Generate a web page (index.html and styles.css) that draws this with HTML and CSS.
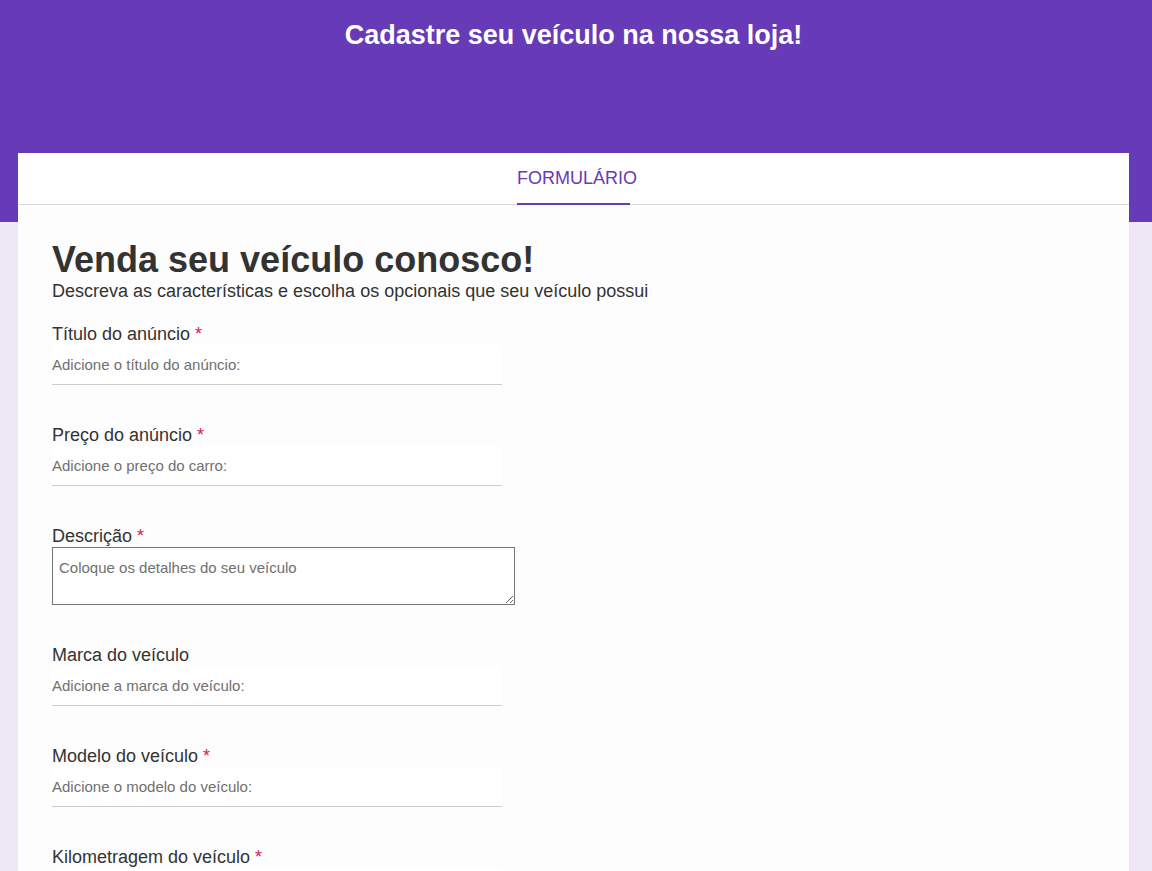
FILE: index.html
```html
<!DOCTYPE html>
<html lang="pt-BR">
<head>
<meta charset="utf-8">
<title>Cadastre seu veículo</title>
<link rel="stylesheet" href="styles.css">
</head>
<body>
<div class="page">
  <header class="top">
    <h1 class="top-title">Cadastre seu veículo na nossa loja!</h1>
  </header>
  <main class="card">
    <nav class="tabs">
      <div class="tab">FORMULÁRIO</div>
    </nav>
    <form class="content">
      <h2 class="heading">Venda seu veículo conosco!</h2>
      <p class="subtitle">Descreva as características e escolha os opcionais que seu veículo possui</p>

      <div class="fields">
        <div class="field">
          <label class="label">Título do anúncio <span class="req">*</span></label>
          <input class="input" type="text" placeholder="Adicione o título do anúncio:">
        </div>

        <div class="field">
          <label class="label">Preço do anúncio <span class="req">*</span></label>
          <input class="input" type="text" placeholder="Adicione o preço do carro:">
        </div>

        <div class="field">
          <label class="label">Descrição <span class="req">*</span></label>
          <textarea class="textarea" placeholder="Coloque os detalhes do seu veículo"></textarea>
        </div>

        <div class="field">
          <label class="label">Marca do veículo</label>
          <input class="input" type="text" placeholder="Adicione a marca do veículo:">
        </div>

        <div class="field">
          <label class="label">Modelo do veículo <span class="req">*</span></label>
          <input class="input" type="text" placeholder="Adicione o modelo do veículo:">
        </div>

        <div class="field">
          <label class="label">Kilometragem do veículo <span class="req">*</span></label>
          <input class="input" type="text" placeholder="Adicione a kilometragem do veículo:">
        </div>
      </div>
    </form>
  </main>
</div>
</body>
</html>
```

FILE: styles.css
```css
* { box-sizing: border-box; }

html, body {
  margin: 0;
  padding: 0;
}

body {
  font-family: "Liberation Sans", Arial, sans-serif;
  color: #333333;
  background: #ede7f6;
}

.page {
  min-height: 871px;
  background: linear-gradient(#673ab7 0, #673ab7 222px, #ede7f6 222px);
  padding: 0 23px 0 18px;
}

.top {
  height: 153px;
  padding-top: 20px;
}

.top-title {
  margin: 0;
  text-align: center;
  color: #ffffff;
  font-size: 27px;
  line-height: 30px;
  font-weight: bold;
}

.card {
  background: #fdfdfd;
  min-height: 718px;
}

.tabs {
  height: 52px;
  background: #ffffff;
  border-bottom: 1px solid #dadada;
  display: flex;
  justify-content: center;
}

.tab {
  width: 113px;
  height: 52px;
  line-height: 51px;
  font-size: 18px;
  color: #673ab7;
  white-space: nowrap;
  border-bottom: 2px solid #673ab7;
  margin-bottom: -1px;
}

.content {
  padding: 34px 34px 0 34px;
}

.heading {
  margin: 0;
  font-size: 36px;
  line-height: 42px;
  font-weight: bold;
  color: #333333;
}

.subtitle {
  margin: 0;
  font-size: 18px;
  line-height: 21px;
  color: #333333;
}

.fields {
  display: flex;
  flex-direction: column;
  gap: 39px;
  padding-top: 21px;
}

.label {
  display: block;
  font-size: 18px;
  line-height: 22px;
  color: #333333;
}

.req {
  color: #d6204f;
}

.input {
  display: block;
  width: 450px;
  height: 40px;
  margin: 0;
  padding: 0;
  border: none;
  border-bottom: 1px solid #cccccc;
  background: #ffffff;
  font-family: "Liberation Sans", Arial, sans-serif;
  font-size: 15px;
  color: #333333;
  outline: none;
}

.input::placeholder {
  color: #707070;
}

.textarea {
  display: block;
  width: 463px;
  height: 58px;
  margin: 0;
  padding: 11px 6px;
  border: 1px solid #767676;
  background: #ffffff;
  font-family: "Liberation Sans", Arial, sans-serif;
  font-size: 15px;
  line-height: 17px;
  color: #333333;
  resize: both;
}

.textarea::placeholder {
  color: #707070;
}
```
